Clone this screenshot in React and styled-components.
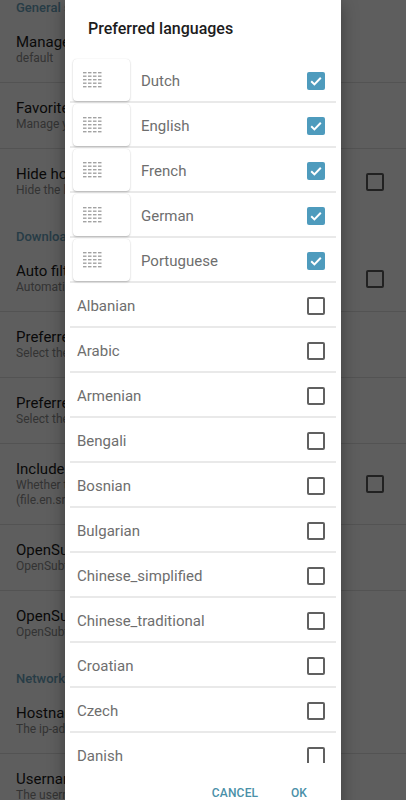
import React from 'react';
import styled, { createGlobalStyle } from 'styled-components';

const GlobalStyle = createGlobalStyle`
  html, body {
    margin: 0;
    padding: 0;
    background: #ffffff;
    overflow: hidden;
  }
  body {
    font-family: Roboto, "Liberation Sans", Arial, sans-serif;
  }
`;

const Screen = styled.div`
  position: relative;
  width: 406px;
  height: 800px;
  overflow: hidden;
  background: #ffffff;
`;

const SettingsList = styled.div`
  display: flex;
  flex-direction: column;
  margin-top: -15px;
`;

const SectionHeader = styled.div`
  padding: 15px 16px 1px;
  font-size: 13px;
  line-height: 16px;
  font-weight: 500;
  color: #6aa3bd;
`;

const SettingItem = styled.div`
  display: flex;
  align-items: center;
  padding: 16px 22px 16px 16px;
  border-bottom: ${props => (props.$last ? 'none' : '1px solid #e2e2e2')};
`;

const SettingText = styled.div`
  flex: 1;
  min-width: 0;
  padding-right: 40px;
`;

const SettingTitle = styled.div`
  font-size: 15px;
  line-height: 18px;
  color: #1a1a1a;
`;

const SettingSub = styled.div`
  font-size: 12px;
  line-height: 15px;
  color: #8c8c8c;
`;

const PlainBox = styled.div`
  flex: none;
  width: 18px;
  height: 18px;
  box-sizing: border-box;
  border: 2px solid ${props => props.$color || '#5a5a5a'};
  border-radius: 2px;
`;

const Overlay = styled.div`
  position: absolute;
  inset: 0;
  background: rgba(0, 0, 0, 0.63);
`;

const Dialog = styled.div`
  position: absolute;
  top: 0;
  left: 65px;
  width: 276px;
  height: 840px;
  background: #ffffff;
  display: flex;
  flex-direction: column;
  box-shadow: 0 4px 16px rgba(0, 0, 0, 0.35);
`;

const DialogTitle = styled.div`
  height: 57px;
  box-sizing: border-box;
  padding: 18px 0 0 23px;
  font-size: 16px;
  line-height: 22px;
  font-weight: 500;
  color: #1c1c1c;
`;

const LangList = styled.div`
  height: 705px;
  overflow: hidden;
  padding: 1px 5px 0;
  flex: none;
`;

const LangRow = styled.div`
  display: flex;
  align-items: center;
  height: 45px;
  box-sizing: border-box;
  border-bottom: 2px solid #e9e9e9;
  padding: ${props => (props.$pinned ? '2px 11px 0 3px' : '3px 11px 0 7px')};
`;

const DragCard = styled.div`
  flex: none;
  width: 57px;
  height: 42px;
  box-sizing: border-box;
  border-radius: 4px;
  background: #ffffff;
  box-shadow: 0 1px 2px rgba(0, 0, 0, 0.22), 0 0 1px rgba(0, 0, 0, 0.12);
  display: flex;
  align-items: center;
  padding-left: 10px;
  margin-right: 11px;
  margin-bottom: 1px;
`;

const LangName = styled.div`
  flex: 1;
  font-size: 15px;
  color: #6e6e6e;
`;

const CheckedBox = styled.div`
  flex: none;
  width: 18px;
  height: 18px;
  border-radius: 2px;
  background: #4e9bbd;
  display: flex;
  align-items: center;
  justify-content: center;
`;

const Footer = styled.div`
  display: flex;
  justify-content: flex-end;
  padding: 12px 10px 8px;
`;

const TextButton = styled.button`
  min-width: 64px;
  height: 36px;
  padding: 0 8px;
  border: none;
  background: transparent;
  font-family: Roboto, "Liberation Sans", Arial, sans-serif;
  font-size: 12px;
  font-weight: 500;
  letter-spacing: 0.2px;
  color: #4a90a8;
  text-transform: uppercase;
`;

const Grip = () => (
  <svg width="19" height="16" viewBox="0 0 19 16">
    {[0, 1, 2, 3, 4].map(r =>
      [0, 1, 2, 3].map(c => (
        <rect key={`${r}-${c}`} x={c * 5} y={r * 3.5} width="3.5" height="1.4" fill="#a3a3a3" />
      ))
    )}
  </svg>
);

const Tick = () => (
  <svg width="14" height="14" viewBox="0 0 14 14">
    <polyline points="2.2,7.3 5.4,10.4 11.8,3.8" fill="none" stroke="#ffffff" strokeWidth="2" />
  </svg>
);

const settings = [
  { header: 'General settings' },
  { title: 'Manage servers', sub: 'default' },
  { title: 'Favorite folders', sub: 'Manage your favorites' },
  { title: 'Hide home folders', sub: 'Hide the home folders', check: true, last: true },
  { header: 'Download settings' },
  { title: 'Auto filter', sub: 'Automatically filter results', check: true },
  { title: 'Preferred languages', sub: 'Select the languages' },
  { title: 'Preferred format', sub: 'Select the format' },
  { title: 'Include suffix', sub: 'Whether to add the language', sub2: '(file.en.srt)', check: true },
  { title: 'OpenSubtitles user', sub: 'OpenSubtitles username' },
  { title: 'OpenSubtitles pass', sub: 'OpenSubtitles password', last: true },
  { header: 'Network settings' },
  { title: 'Hostname', sub: 'The ip-address of the host' },
  { title: 'Username', sub: 'The username to log in' },
];

const pinned = ['Dutch', 'English', 'French', 'German', 'Portuguese'];
const others = [
  'Albanian', 'Arabic', 'Armenian', 'Bengali', 'Bosnian', 'Bulgarian',
  'Chinese_simplified', 'Chinese_traditional', 'Croatian', 'Czech', 'Danish', 'Dari',
];

export default function App() {
  return (
    <>
      <GlobalStyle />
      <Screen>
        <SettingsList>
          {settings.map((s, i) =>
            s.header ? (
              <SectionHeader key={i}>{s.header}</SectionHeader>
            ) : (
              <SettingItem key={i} $last={s.last}>
                <SettingText>
                  <SettingTitle>{s.title}</SettingTitle>
                  <SettingSub>{s.sub}</SettingSub>
                  {s.sub2 && <SettingSub>{s.sub2}</SettingSub>}
                </SettingText>
                {s.check && <PlainBox />}
              </SettingItem>
            )
          )}
        </SettingsList>
        <Overlay />
        <Dialog>
          <DialogTitle>Preferred languages</DialogTitle>
          <LangList>
            {pinned.map(name => (
              <LangRow key={name} $pinned>
                <DragCard>
                  <Grip />
                </DragCard>
                <LangName>{name}</LangName>
                <CheckedBox>
                  <Tick />
                </CheckedBox>
              </LangRow>
            ))}
            {others.map(name => (
              <LangRow key={name}>
                <LangName>{name}</LangName>
                <PlainBox $color="#606060" />
              </LangRow>
            ))}
          </LangList>
          <Footer>
            <TextButton>Cancel</TextButton>
            <TextButton>OK</TextButton>
          </Footer>
        </Dialog>
      </Screen>
    </>
  );
}
